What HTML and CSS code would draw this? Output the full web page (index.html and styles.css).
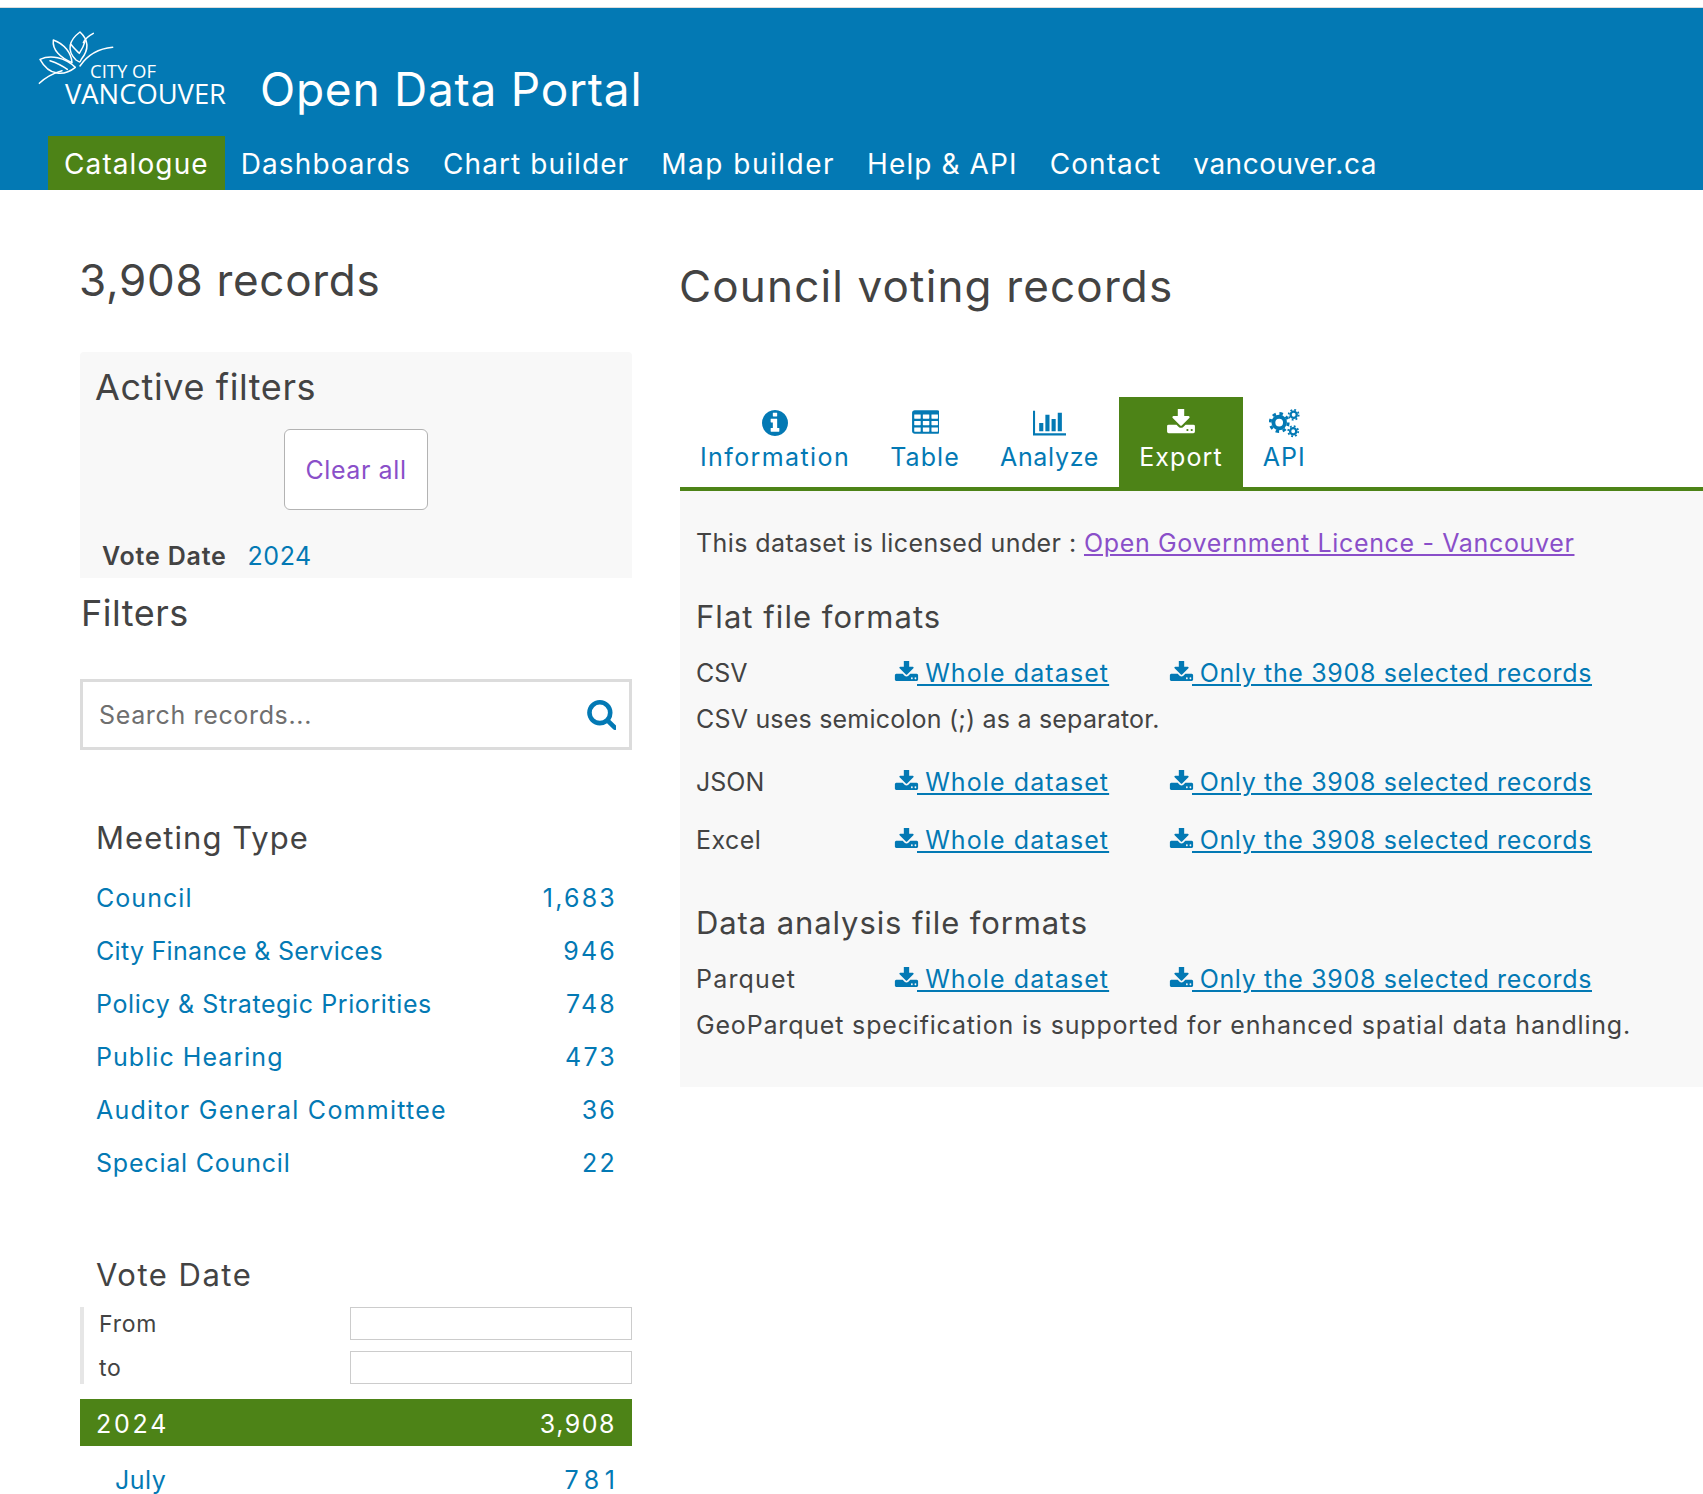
FILE: index.html
```html
<!DOCTYPE html>
<html lang="en">
<head>
<meta charset="utf-8">
<title>Council voting records</title>
<link rel="stylesheet" href="styles.css">
</head>
<body>
<svg class="sprite" width="0" height="0" aria-hidden="true">
  <symbol id="i-download" viewBox="0 128 1792 1536"><path d="M1344 1344q0-26-19-45t-45-19-45 19-19 45 19 45 45 19 45-19 19-45zm256 0q0-26-19-45t-45-19-45 19-19 45 19 45 45 19 45-19 19-45zm128-224v320q0 40-28 68t-68 28h-1472q-40 0-68-28t-28-68v-320q0-40 28-68t68-28h465l135 136q58 56 136 56t136-56l136-136h464q40 0 68 28t28 68zm-325-569q17 41-14 70l-448 448q-18 19-45 19t-45-19l-448-448q-31-29-14-70 17-39 59-39h256v-448q0-26 19-45t45-19h256q26 0 45 19t19 45v448h256q42 0 59 39z"/></symbol>
  <symbol id="i-info" viewBox="128 128 1536 1536"><path d="M1152 1376v-160q0-14-9-23t-23-9h-96v-512q0-14-9-23t-23-9h-320q-14 0-23 9t-9 23v160q0 14 9 23t23 9h96v320h-96q-14 0-23 9t-9 23v160q0 14 9 23t23 9h448q14 0 23-9t9-23zm-128-896v-160q0-14-9-23t-23-9h-192q-14 0-23 9t-9 23v160q0 14 9 23t23 9h192q14 0 23-9t9-23zm640 416q0 209-103 385.500t-279.500 279.500-385.500 103-385.500-103-279.500-279.500-103-385.500 103-385.500 279.500-279.500 385.500-103 385.500 103 279.500 279.500 103 385.500z"/></symbol>
  <symbol id="i-table" viewBox="0 128 1664 1408"><path d="M576 1376v-192q0-14-9-23t-23-9h-320q-14 0-23 9t-9 23v192q0 14 9 23t23 9h320q14 0 23-9t9-23zm0-384v-192q0-14-9-23t-23-9h-320q-14 0-23 9t-9 23v192q0 14 9 23t23 9h320q14 0 23-9t9-23zm512 384v-192q0-14-9-23t-23-9h-320q-14 0-23 9t-9 23v192q0 14 9 23t23 9h320q14 0 23-9t9-23zm-512-768v-192q0-14-9-23t-23-9h-320q-14 0-23 9t-9 23v192q0 14 9 23t23 9h320q14 0 23-9t9-23zm512 384v-192q0-14-9-23t-23-9h-320q-14 0-23 9t-9 23v192q0 14 9 23t23 9h320q14 0 23-9t9-23zm512 384v-192q0-14-9-23t-23-9h-320q-14 0-23 9t-9 23v192q0 14 9 23t23 9h320q14 0 23-9t9-23zm-512-768v-192q0-14-9-23t-23-9h-320q-14 0-23 9t-9 23v192q0 14 9 23t23 9h320q14 0 23-9t9-23zm512 384v-192q0-14-9-23t-23-9h-320q-14 0-23 9t-9 23v192q0 14 9 23t23 9h320q14 0 23-9t9-23zm0-384v-192q0-14-9-23t-23-9h-320q-14 0-23 9t-9 23v192q0 14 9 23t23 9h320q14 0 23-9t9-23zm128-320v1088q0 66-47 113t-113 47h-1344q-66 0-113-47t-47-113v-1088q0-66 47-113t113-47h1344q66 0 113 47t47 113z"/></symbol>
  <symbol id="i-chart" viewBox="0 128 2048 1536"><path d="M640 896v512h-256v-512h256zm384-512v1024h-256v-1024h256zm1024 1152v128h-2048v-1536h128v1408h1920zm-640-896v768h-256v-768h256zm384-384v1152h-256v-1152h256z"/></symbol>
  <symbol id="i-search" viewBox="0 128 1664 1664"><path d="M1216 832q0-185-131.500-316.500t-316.500-131.500-316.500 131.500-131.500 316.500 131.500 316.500 316.500 131.500 316.500-131.500 131.500-316.500zm512 832q0 52-38 90t-90 38q-54 0-90-38l-343-342q-179 124-399 124-143 0-273.500-55.500t-225-150-150-225-55.500-273.500 55.500-273.500 150-225 225-150 273.500-55.500 273.500 55.500 225 150 150 225 55.500 273.500q0 220-124 399l343 343q37 37 37 90z"/></symbol>
  <symbol id="i-cogs" viewBox="0 0 32 30">
    <g fill="none" stroke="currentColor">
      <circle cx="10.500" cy="14" r="6" stroke-width="4"/>
      <circle cx="10.500" cy="14" r="9.300" stroke-width="3" stroke-dasharray="3.600 3.700"/>
      <circle cx="25.500" cy="6" r="3.200" stroke-width="2.400"/>
      <circle cx="25.500" cy="6" r="5.200" stroke-width="1.800" stroke-dasharray="1.900 2.180"/>
      <circle cx="25" cy="23" r="3.200" stroke-width="2.400"/>
      <circle cx="25" cy="23" r="5.200" stroke-width="1.800" stroke-dasharray="1.900 2.180"/>
    </g>
  </symbol>
</svg>

<header class="site-header">
  <div class="brand">
    <svg class="logo" viewBox="0 0 630 270" role="img" aria-label="City of Vancouver">
      <g class="logo-lines">
        <path d="M150 24C118 48 108 78 138 108C150 116 150 116 154 106C176 78 178 50 150 24Z"/>
        <path d="M124 62C130 72 140 80 148 88C156 76 162 64 166 50"/>
        <path d="M70 48C66 78 92 102 126 116C124 88 104 60 70 48Z"/>
        <path d="M30 106C62 92 104 100 136 130C104 156 58 158 30 106Z"/>
        <path d="M60 110C78 116 96 124 112 136"/>
        <path d="M248 70C205 74 172 94 150 126"/>
        <path d="M190 28C175 36 165 44 160 56"/>
        <path d="M28 178C46 160 68 148 96 140"/>
      </g>
      <text class="logo-small" x="180" y="162" textLength="198" lengthAdjust="spacingAndGlyphs">CITY OF</text>
      <text class="logo-big" x="105" y="240" textLength="483" lengthAdjust="spacingAndGlyphs">VANCOUVER</text>
    </svg>
    <h1 class="portal-title">Open Data Portal</h1>
  </div>
  <nav class="main-nav">
    <a class="nav-link is-active" href="#">Catalogue</a>
    <a class="nav-link" href="#">Dashboards</a>
    <a class="nav-link" href="#">Chart builder</a>
    <a class="nav-link nav-wide" href="#">Map builder</a>
    <a class="nav-link" href="#">Help &amp; API</a>
    <a class="nav-link" href="#">Contact</a>
    <a class="nav-link nav-tight" href="#">vancouver.ca</a>
  </nav>
</header>

<div class="page">
  <aside class="sidebar">
    <h2 class="records-count">3,908 records</h2>

    <section class="active-filters">
      <h3 class="active-title">Active filters</h3>
      <div class="clear-wrap"><button class="clear-btn" type="button">Clear all</button></div>
      <div class="active-item"><strong>Vote Date</strong><a href="#">2024</a></div>
    </section>

    <h3 class="filters-title">Filters</h3>
    <form class="search-box">
      <input class="search-input" type="text" placeholder="Search records...">
      <svg class="search-icon"><use href="#i-search"/></svg>
    </form>

    <h4 class="facet-title facet-first">Meeting Type</h4>
    <ul class="facet-list">
      <li class="facet-row"><a class="ls-wide" href="#">Council</a><span>1,683</span></li>
      <li class="facet-row"><a class="ls-narrow" href="#">City Finance &amp; Services</a><span>946</span></li>
      <li class="facet-row"><a class="ls-policy" href="#">Policy &amp; Strategic Priorities</a><span>748</span></li>
      <li class="facet-row"><a class="ls-wide" href="#">Public Hearing</a><span>473</span></li>
      <li class="facet-row"><a class="ls-xwide" href="#">Auditor General Committee</a><span>36</span></li>
      <li class="facet-row"><a class="ls-mid" href="#">Special Council</a><span>22</span></li>
    </ul>

    <h4 class="facet-title facet-date">Vote Date</h4>
    <div class="date-range">
      <label class="date-row">From<input class="date-input" type="text"></label>
      <label class="date-row">to<input class="date-input" type="text"></label>
    </div>
    <div class="year-bar"><span class="year-label">2024</span><span>3,908</span></div>
    <div class="facet-row month-row"><a class="ls-month" href="#">July</a><span>781</span></div>
  </aside>

  <main class="content">
    <h2 class="dataset-title">Council voting records</h2>
    <div class="tabs">
      <a class="tab tab-wide" href="#"><svg class="tab-icon w-info"><use href="#i-info"/></svg>Information</a>
      <a class="tab" href="#"><svg class="tab-icon w-table"><use href="#i-table"/></svg>Table</a>
      <a class="tab tab-tight" href="#"><svg class="tab-icon w-chart"><use href="#i-chart"/></svg>Analyze</a>
      <a class="tab is-active" href="#"><svg class="tab-icon w-down"><use href="#i-download"/></svg>Export</a>
      <a class="tab" href="#"><svg class="tab-icon w-cogs"><use href="#i-cogs"/></svg>API</a>
    </div>
    <section class="panel">
      <p class="licence">This dataset is licensed under : <a href="#">Open Government Licence - Vancouver</a></p>

      <h3 class="panel-heading">Flat file formats</h3>
      <div class="format-row">
        <span class="format-name">CSV</span>
        <a class="dl dl-whole" href="#"><svg class="dl-icon"><use href="#i-download"/></svg> Whole dataset</a>
        <a class="dl" href="#"><svg class="dl-icon"><use href="#i-download"/></svg> Only the 3908 selected records</a>
      </div>
      <p class="format-note note-csv">CSV uses semicolon (;) as a separator.</p>
      <div class="format-row">
        <span class="format-name">JSON</span>
        <a class="dl dl-whole" href="#"><svg class="dl-icon"><use href="#i-download"/></svg> Whole dataset</a>
        <a class="dl" href="#"><svg class="dl-icon"><use href="#i-download"/></svg> Only the 3908 selected records</a>
      </div>
      <div class="format-row">
        <span class="format-name name-excel">Excel</span>
        <a class="dl dl-whole" href="#"><svg class="dl-icon"><use href="#i-download"/></svg> Whole dataset</a>
        <a class="dl" href="#"><svg class="dl-icon"><use href="#i-download"/></svg> Only the 3908 selected records</a>
      </div>

      <h3 class="panel-heading heading-analysis">Data analysis file formats</h3>
      <div class="format-row">
        <span class="format-name name-parquet">Parquet</span>
        <a class="dl dl-whole" href="#"><svg class="dl-icon"><use href="#i-download"/></svg> Whole dataset</a>
        <a class="dl" href="#"><svg class="dl-icon"><use href="#i-download"/></svg> Only the 3908 selected records</a>
      </div>
      <p class="format-note">GeoParquet specification is supported for enhanced spatial data handling.</p>
    </section>
  </main>
</div>
</body>
</html>
```
FILE: styles.css
```css
* { box-sizing: border-box; }
html, body { margin: 0; padding: 0; }
body {
  height: 1494px;
  overflow: hidden;
  background: #fff;
  color: #434343;
  font-family: Inter, "Open Sans", sans-serif;
  font-size: 25px;
  font-weight: 400;
}
a { color: #0379b4; text-decoration: none; }
h1, h2, h3, h4, p, ul { margin: 0; padding: 0; font-weight: 400; }
ul { list-style: none; }
.sprite { position: absolute; }
svg { fill: currentColor; }

/* Header */
.site-header {
  margin-top: 7px;
  border-top: 1px solid #dcdcdc;
  background: #0379b4;
  color: #fff;
  height: 183px;
  display: flex;
  flex-direction: column;
}
.brand { height: 128px; display: flex; align-items: flex-start; padding-left: 30px; }
.logo { width: 210px; height: 90px; margin-top: 16px; fill: #fff; flex: none; }
.logo-lines path { fill: none; stroke: #fff; stroke-width: 4.5; stroke-linejoin: round; stroke-linecap: round; }
.logo-small { font-family: "Open Sans", sans-serif; font-size: 56px; font-weight: 400; }
.logo-big { font-family: "Open Sans", sans-serif; font-size: 84px; font-weight: 400; }
.portal-title { font-size: 46px; line-height: 56px; margin: 53px 0 0 20px; letter-spacing: 0.75px; }
.main-nav { display: flex; height: 54px; padding-left: 48px; }
.nav-link { color: #fff; font-size: 28px; line-height: 56px; padding: 0 16px; letter-spacing: 1.1px; }
.nav-wide { letter-spacing: 1.5px; }
.nav-tight { letter-spacing: 0.5px; }
.nav-link.is-active { background: #4d8317; }

/* Page */
.page { display: grid; grid-template-columns: 552px 1fr; column-gap: 48px; padding-left: 80px; }

/* Sidebar */
.records-count { font-size: 44px; line-height: 56px; margin: 62px 0 0 -1px; letter-spacing: 0.7px; }
.active-filters { margin-top: 44px; height: 226px; background: #f8f8f8; border-radius: 4px 4px 0 0; }
.active-title { font-size: 36px; line-height: 46px; padding: 12px 0 0 15px; letter-spacing: 0.6px; }
.clear-wrap { display: flex; justify-content: center; margin-top: 19px; }
.clear-btn {
  width: 144px; height: 81px;
  background: #fff;
  border: 1px solid #b3b3b3;
  border-radius: 6px;
  color: #8a4fc9;
  font: inherit;
  letter-spacing: 0.6px;
  padding: 0;
}
.active-item { display: flex; gap: 21px; padding: 29px 0 0 22px; line-height: 34px; }
.active-item strong { font-weight: 600; letter-spacing: 0.8px; }
.active-item a { letter-spacing: 0.5px; }
.filters-title { font-size: 36px; line-height: 46px; margin-top: 12px; padding-left: 1px; letter-spacing: 0.5px; }
.search-box {
  margin-top: 43px;
  height: 71px;
  border: 3px solid #dcdcdc;
  display: flex;
  align-items: center;
  padding: 0 13px 0 16px;
  background: #fff;
}
.search-input { flex: 1; min-width: 0; border: 0; outline: 0; font: inherit; color: #434343; padding: 0; background: transparent; letter-spacing: 0.65px; }
.search-input::placeholder { color: #6f6f6f; opacity: 1; }
.search-icon { width: 30px; height: 30px; color: #0379b4; flex: none; }

.facet-title { font-size: 31px; line-height: 40px; padding-left: 16px; letter-spacing: 1.05px; }
.facet-first { margin-top: 68px; }
.facet-date { margin-top: 65px; letter-spacing: 1.5px; }
.facet-list { margin-top: 14px; }
.facet-row { display: flex; justify-content: space-between; height: 53px; line-height: 53px; padding: 0 15px 0 16px; }
.facet-row span { color: #0379b4; letter-spacing: 2.2px; }
.ls-narrow { letter-spacing: 0.3px; }
.ls-policy { letter-spacing: 0.6px; }
.ls-mid { letter-spacing: 0.8px; }
.ls-wide { letter-spacing: 1.05px; }
.ls-xwide { letter-spacing: 1.25px; }
.ls-month { letter-spacing: 0.5px; }

.date-range { margin-top: 12px; height: 77px; border-left: 4px solid #e6e6e6; display: flex; flex-direction: column; gap: 11px; }
.date-row { display: flex; justify-content: space-between; align-items: center; height: 33px; padding-left: 15px; font-size: 23px; letter-spacing: 0.8px; }
.date-input { width: 282px; height: 33px; border: 1px solid #ccc; background: #fff; padding: 0; }
.year-bar { margin-top: 15px; height: 47px; line-height: 50px; background: #4d8317; color: #fff; display: flex; justify-content: space-between; padding: 0 16px; letter-spacing: 1.5px; }
.year-label { letter-spacing: 2.8px; }
.month-row { margin-top: 8px; padding-left: 35px; padding-right: 16px; }
.month-row span { letter-spacing: 5.5px; margin-right: -4.500px; }

/* Main */
.dataset-title { font-size: 44px; line-height: 58px; margin: 67px 0 0 -1px; letter-spacing: 1.15px; }
.tabs { margin-top: 82px; height: 94px; display: flex; border-bottom: 4px solid #4d8317; }
.tab { padding: 0 20px 12px; height: 90px; display: flex; flex-direction: column; align-items: center; justify-content: flex-end; line-height: 36px; letter-spacing: 1.1px; }
.tab-wide { letter-spacing: 1.4px; }
.tab-tight { letter-spacing: 0.7px; }
.tab.is-active { background: #4d8317; color: #fff; }
.tab-icon { height: 26px; margin-bottom: 3px; flex: none; }
.w-info { width: 26px; }
.w-table { width: 28px; height: 24px; margin-bottom: 5px; }
.w-chart { width: 33px; }
.w-down { width: 30px; height: 27px; }
.w-cogs { width: 31px; height: 29px; margin-bottom: 1px; }

.panel { background: #f8f8f8; height: 596px; padding: 34px 16px 0; }
.licence { line-height: 36px; letter-spacing: 0.42px; }
.licence a { color: #8a4fc9; text-decoration: underline; letter-spacing: 0.65px; }
.panel-heading { font-size: 31px; line-height: 40px; margin-top: 36px; letter-spacing: 1.05px; }
.heading-analysis { margin-top: 34px; letter-spacing: 0.9px; }
.format-row { display: flex; align-items: center; height: 58px; margin-top: 7px; }
.format-row + .format-row { margin-top: 0; }
.format-note + .format-row { margin-top: 17px; }
.format-name { width: 198px; flex: none; }
.name-excel { letter-spacing: 0.45px; }
.name-parquet { letter-spacing: 1.2px; }
.dl { text-decoration: underline; white-space: nowrap; letter-spacing: 0.65px; }
.dl-whole { width: 275px; flex: none; letter-spacing: 1.1px; }
.dl-icon { width: 25px; height: 22px; vertical-align: -1px; margin-right: -2px; }
.format-note { line-height: 34px; margin-top: 0; letter-spacing: 0.82px; }
.note-csv { letter-spacing: 0.2px; }
```
